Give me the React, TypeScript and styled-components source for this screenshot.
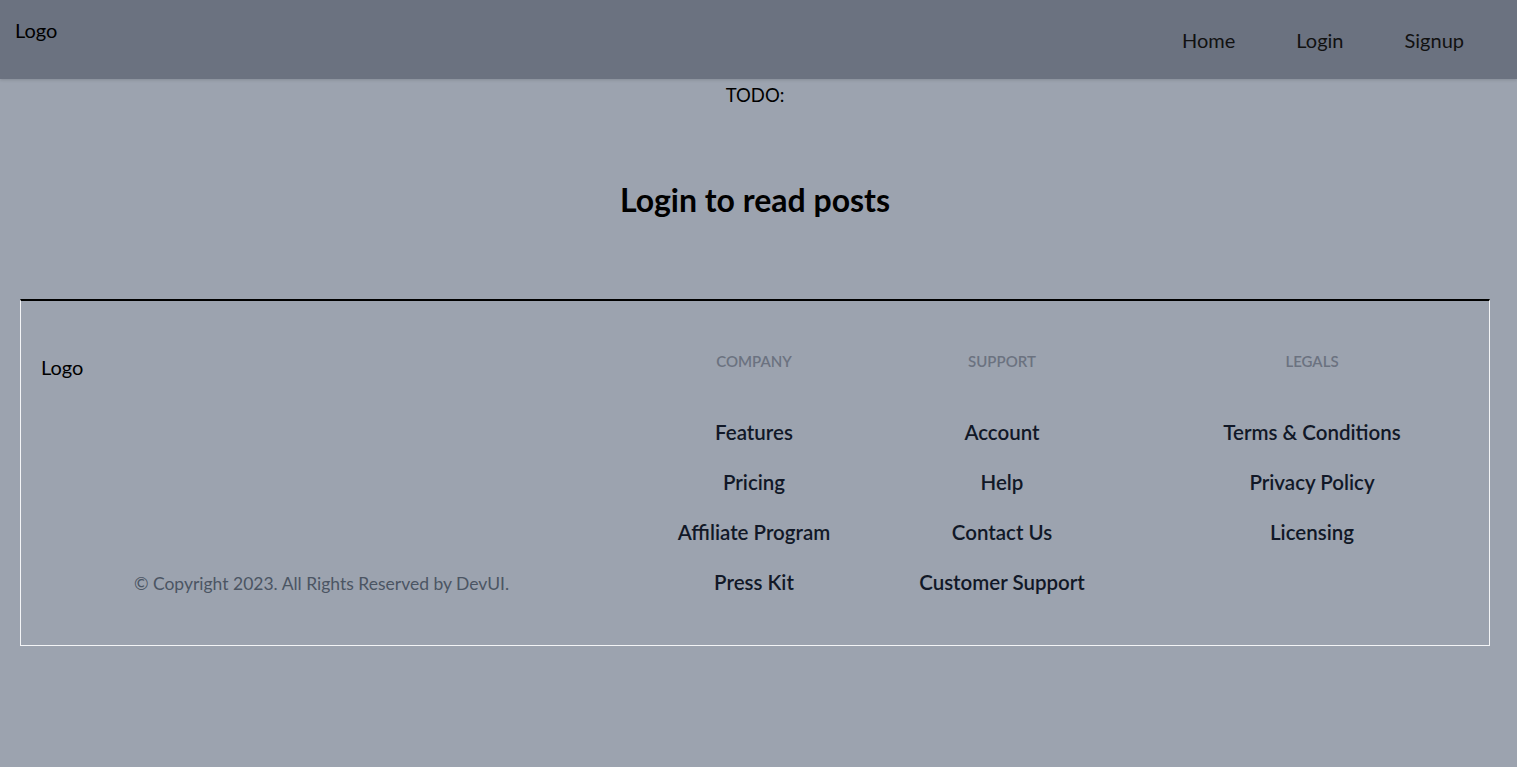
import React from 'react';
import styled, { createGlobalStyle } from 'styled-components';

const GlobalStyle = createGlobalStyle`
  html, body {
    margin: 0;
    padding: 0;
  }
  body {
    background-color: #9ca3af;
    font-family: Lato, "Open Sans", "Liberation Sans", sans-serif;
    color: #000;
    min-height: 100vh;
  }
  * {
    box-sizing: border-box;
  }
`;

interface IFooterColumn {
  title: string;
  links: string[];
  shift?: number;
}

const columns: IFooterColumn[] = [
  { title: 'Company', links: ['Features', 'Pricing', 'Affiliate Program', 'Press Kit'] },
  { title: 'Support', links: ['Account', 'Help', 'Contact Us', 'Customer Support'] },
  { title: 'Legals', links: ['Terms & Conditions', 'Privacy Policy', 'Licensing'], shift: 37 },
];

function FooterColumn(props: IFooterColumn) {
  const { title, links, shift = 0 } = props;
  return (
    <Column $shift={shift}>
      <ColumnTitle>{title}</ColumnTitle>
      <LinkList>
        {links.map((link) => (
          <FooterLink key={link}>{link}</FooterLink>
        ))}
      </LinkList>
    </Column>
  );
}

export default function App() {
  return (
    <>
      <GlobalStyle />
      <Header>
        <HeaderLogo>Logo</HeaderLogo>
        <Nav>
          <NavLink>Home</NavLink>
          <NavLink>Login</NavLink>
          <NavLink>Signup</NavLink>
        </Nav>
      </Header>
      <Main>
        <Todo>TODO:</Todo>
        <Heading>Login to read posts</Heading>
        <Footer>
          <Brand>
            <FooterLogo>Logo</FooterLogo>
            <Copyright>© Copyright 2023. All Rights Reserved by DevUI.</Copyright>
          </Brand>
          {columns.map((column) => (
            <FooterColumn key={column.title} {...column} />
          ))}
        </Footer>
      </Main>
    </>
  );
}

const Header = styled.header`
  display: flex;
  justify-content: space-between;
  align-items: flex-start;
  height: 79px;
  padding-right: 53px;
  background-color: #6b7280;
  box-shadow: 0 1px 3px rgba(0, 0, 0, 0.15);
`;

const HeaderLogo = styled.div`
  padding: 15px;
  font-size: 20px;
  line-height: 30px;
`;

const Nav = styled.nav`
  display: flex;
  align-items: center;
  gap: 61px;
  height: 100%;
`;

const NavLink = styled.a`
  font-size: 20px;
  line-height: 30px;
  color: #111;
  cursor: pointer;
`;

const Main = styled.main`
  margin: 0 27px 0 20px;
`;

const Todo = styled.p`
  margin: 0;
  padding-top: 1px;
  text-align: center;
  font-size: 18.5px;
  line-height: 30px;
`;

const Heading = styled.h1`
  margin: 0;
  padding: 70px 0 79px;
  text-align: center;
  font-size: 32px;
  line-height: 40px;
  font-weight: 700;
`;

const Footer = styled.footer`
  display: grid;
  grid-template-columns: 561px 304px 192px 1fr;
  padding: 50px 0 49px 20px;
  border: 1px solid #f3f4f6;
  border-top: 2px solid #000;
`;

const Brand = styled.div`
  display: flex;
  flex-direction: column;
  justify-content: space-between;
`;

const FooterLogo = styled.div`
  margin-top: 2px;
  font-size: 20px;
  line-height: 28px;
`;

const Copyright = styled.p`
  margin: 0;
  text-align: center;
  font-size: 17.5px;
  line-height: 24px;
  color: #4b5563;
`;

const Column = styled.div<{ $shift: number }>`
  display: flex;
  flex-direction: column;
  align-items: center;
  padding-left: ${({ $shift }) => `${$shift}px`};
`;

const ColumnTitle = styled.h2`
  margin: 0 0 47px;
  font-size: 15px;
  line-height: 20px;
  font-weight: 600;
  text-transform: uppercase;
  color: #6b7280;
`;

const LinkList = styled.div`
  display: flex;
  flex-direction: column;
  align-items: center;
  gap: 22px;
`;

const FooterLink = styled.a`
  font-size: 20.5px;
  line-height: 28px;
  font-weight: 600;
  color: #111827;
  cursor: pointer;
  white-space: nowrap;
`;
